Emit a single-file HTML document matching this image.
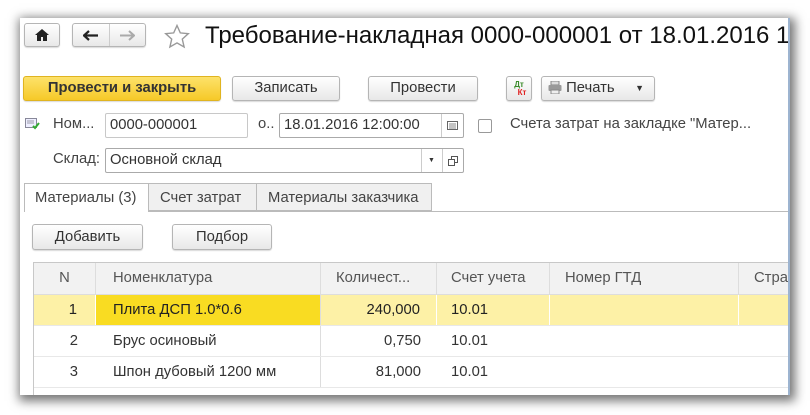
<!DOCTYPE html>
<html><head><meta charset="utf-8"><style>
*{box-sizing:border-box;margin:0;padding:0}
body{width:810px;height:415px;background:#fff;position:relative;overflow:hidden;font-family:"Liberation Sans","Noto Sans CJK SC",sans-serif;font-size:14.8px;color:#333}
.win{position:absolute;left:20px;top:18px;width:770px;height:377px;background:#fff;box-shadow:2px 3px 10px 3px rgba(0,0,0,.55);border-right:2px solid #9db4d0;overflow:hidden}
.a{position:absolute;white-space:nowrap}
.btn{position:absolute;border:1px solid #b5b5b5;border-radius:3px;background:linear-gradient(#fff,#e8e8e8);text-align:center;color:#333;box-shadow:0 1px 1px rgba(0,0,0,.15);white-space:nowrap}
.inp{position:absolute;border:1px solid #c8c8c8;border-radius:2px;background:#fff;padding-left:4px;color:#333;white-space:nowrap}
.cell{position:absolute;border-right:1px solid #ddd;height:100%;white-space:nowrap}
</style></head><body>
<div class="win">
<div class="btn" style="left:4px;top:5px;width:36px;height:24px;line-height:22px">
<svg width="14" height="12" viewBox="0 0 14 12" style="margin-top:5px"><path d="M7 0L0 6h2v6h4V8h2v4h4V6h2z" fill="#222"/></svg></div>
<div class="btn" style="left:52px;top:5px;width:74px;height:24px">
<div class="a" style="left:36px;top:0;width:1px;height:22px;background:#ccc"></div>
<svg class="a" style="left:10px;top:6px" width="16" height="11"><path d="M1 5.5h14M6 1L1 5.5 6 10" stroke="#222" stroke-width="2.2" fill="none"/></svg>
<svg class="a" style="left:46px;top:6px" width="16" height="11"><path d="M1 5.5h14M10 1l5 4.5L10 10" stroke="#aaa" stroke-width="2" fill="none"/></svg>
</div>
<svg class="a" style="left:144px;top:6px" width="26" height="25"><path d="M13 1.5l3.3 7.4 8 .8-6 5.4 1.8 7.9L13 18.9 5.9 23l1.8-7.9-6-5.4 8-.8z" fill="none" stroke="#999" stroke-width="1.4"/></svg>
<div class="a" style="left:185px;top:4px;font-size:24px;color:#111">Требование-накладная 0000-000001 от 18.01.2016 1</div>
<div class="btn" style="left:3px;top:58px;width:198px;height:25px;background:linear-gradient(#fde26a,#f6c928);border-color:#e0b420;font-weight:bold;color:#333;line-height:23px">Провести и закрыть</div>
<div class="btn" style="left:212px;top:58px;width:108px;height:25px;line-height:23px">Записать</div>
<div class="btn" style="left:348px;top:58px;width:110px;height:25px;line-height:23px">Провести</div>
<div class="btn" style="left:486px;top:58px;width:26px;height:25px;font-size:8px;font-weight:bold;line-height:8px;padding-top:4px"><span style="color:#3a8a2a">Дт</span><br><span style="color:#e02020;margin-left:6px">Кт</span></div>
<div class="btn" style="left:521px;top:58px;width:114px;height:25px;line-height:23px;text-align:left;padding-left:6px">
<svg width="14" height="13" style="vertical-align:-2px"><rect x="3" y="0" width="8" height="4" fill="#ddd" stroke="#888"/><rect x="0.5" y="4" width="13" height="6" rx="1" fill="#999"/><rect x="3" y="9" width="8" height="4" fill="#eee" stroke="#888"/></svg> Печать
<span class="a" style="right:10px;top:0;font-size:9px">▼</span></div>
<svg class="a" style="left:5px;top:100px" width="16" height="12"><rect x="0.5" y="0.5" width="11" height="9" fill="#eef" stroke="#889"/><path d="M2 3h7M2 5h7" stroke="#99a"/><path d="M8 8l2 2 4-5" stroke="#3a3" stroke-width="2" fill="none"/></svg>
<div class="a" style="left:33px;top:98px;color:#444">Ном...</div>
<div class="inp" style="left:85px;top:95px;width:143px;height:25px;line-height:23px">0000-000001</div>
<div class="a" style="left:238px;top:98px;color:#444">о..</div>
<div class="inp" style="left:259px;top:95px;width:185px;height:25px;line-height:23px;border-color:#aaa">18.01.2016 12:00:00
<div class="a" style="left:161px;top:0;width:1px;height:23px;background:#ccc"></div>
<svg class="a" style="left:167px;top:7px" width="11" height="9"><rect x=".5" y=".5" width="10" height="8" fill="none" stroke="#666"/><path d="M2 3h7M2 5h7M2 7h7" stroke="#888"/></svg></div>
<div class="a" style="left:458px;top:101px;width:14px;height:14px;border:1px solid #999;border-radius:2px"></div>
<div class="a" style="left:490px;top:98px;color:#444">Счета затрат на закладке "Матер...</div>
<div class="a" style="left:33px;top:133px;color:#444">Склад:</div>
<div class="inp" style="left:85px;top:130px;width:359px;height:25px;line-height:23px;border-color:#aaa">Основной склад
<div class="a" style="left:315px;top:0;width:1px;height:23px;background:#ccc"></div>
<div class="a" style="left:336px;top:0;width:1px;height:23px;background:#ccc"></div>
<span class="a" style="left:322px;top:0;font-size:7px">▼</span>
<svg class="a" style="left:342px;top:7px" width="10" height="10"><rect x="3.5" y=".5" width="6" height="6" fill="none" stroke="#555"/><rect x=".5" y="3.5" width="6" height="6" fill="#fff" stroke="#555"/></svg></div>
<div class="a" style="left:4px;top:193px;width:766px;height:1px;background:#bbb"></div>
<div class="a" style="left:4px;top:165px;width:125px;height:29px;border:1px solid #bbb;border-bottom:none;background:#fff;padding:6px 0 0 10px;color:#444">Материалы (3)</div>
<div class="a" style="left:128px;top:165px;width:109px;height:28px;border:1px solid #bbb;background:#f0f0f0;padding:6px 0 0 11px;color:#444">Счет затрат</div>
<div class="a" style="left:236px;top:165px;width:176px;height:28px;border:1px solid #bbb;background:#f0f0f0;padding:6px 0 0 11px;color:#444">Материалы заказчика</div>
<div class="btn" style="left:12px;top:206px;width:111px;height:26px;line-height:24px">Добавить</div>
<div class="btn" style="left:152px;top:206px;width:100px;height:26px;line-height:24px">Подбор</div>
<div class="a" style="left:13px;top:244px;width:760px;height:140px;border:1px solid #c8c8c8;border-right:none">
<div class="a" style="left:0;top:0;width:760px;height:32px;background:#f2f2f2;border-bottom:1px solid #ddd;color:#555">
<div class="cell" style="left:0;width:62px;text-align:center;line-height:31px">N</div>
<div class="cell" style="left:62px;width:225px;padding-left:17px;line-height:31px">Номенклатура</div>
<div class="cell" style="left:287px;width:116px;padding-left:15px;line-height:31px">Количест...</div>
<div class="cell" style="left:403px;width:113px;padding-left:14px;line-height:31px">Счет учета</div>
<div class="cell" style="left:516px;width:189px;padding-left:15px;line-height:31px">Номер ГТД</div>
<div class="cell" style="left:705px;width:60px;padding-left:15px;line-height:31px">Стра</div>
</div>
<div class="a" style="left:0;top:32px;width:760px;height:31px;background:#fdf1a6;border-bottom:1px solid #e8e8e8;color:#222">
<div class="cell" style="left:0;width:62px;text-align:right;padding-right:18px;line-height:30px;border-color:#fff">1</div>
<div class="cell" style="left:62px;width:225px;padding-left:17px;line-height:30px;background:#f9dc22">Плита ДСП 1.0*0.6</div>
<div class="cell" style="left:287px;width:116px;text-align:right;padding-right:16px;line-height:30px;border-color:#fff">240,000</div>
<div class="cell" style="left:403px;width:113px;padding-left:14px;line-height:30px;border-color:#fff">10.01</div>
<div class="cell" style="left:516px;width:189px;border-color:#fff"></div>
</div>
<div class="a" style="left:0;top:63px;width:760px;height:31px;border-bottom:1px solid #e8e8e8">
<div class="cell" style="left:0;width:62px;text-align:right;padding-right:18px;line-height:30px;border:none">2</div>
<div class="cell" style="left:62px;width:225px;padding-left:17px;line-height:30px">Брус осиновый</div>
<div class="cell" style="left:287px;width:116px;text-align:right;padding-right:16px;line-height:30px;border:none">0,750</div>
<div class="cell" style="left:403px;width:113px;padding-left:14px;line-height:30px;border:none">10.01</div>
</div>
<div class="a" style="left:0;top:94px;width:760px;height:31px;border-bottom:1px solid #e8e8e8">
<div class="cell" style="left:0;width:62px;text-align:right;padding-right:18px;line-height:30px;border:none">3</div>
<div class="cell" style="left:62px;width:225px;padding-left:17px;line-height:30px">Шпон дубовый 1200 мм</div>
<div class="cell" style="left:287px;width:116px;text-align:right;padding-right:16px;line-height:30px;border:none">81,000</div>
<div class="cell" style="left:403px;width:113px;padding-left:14px;line-height:30px;border:none">10.01</div>
</div>
</div>
</div>
</body></html>
